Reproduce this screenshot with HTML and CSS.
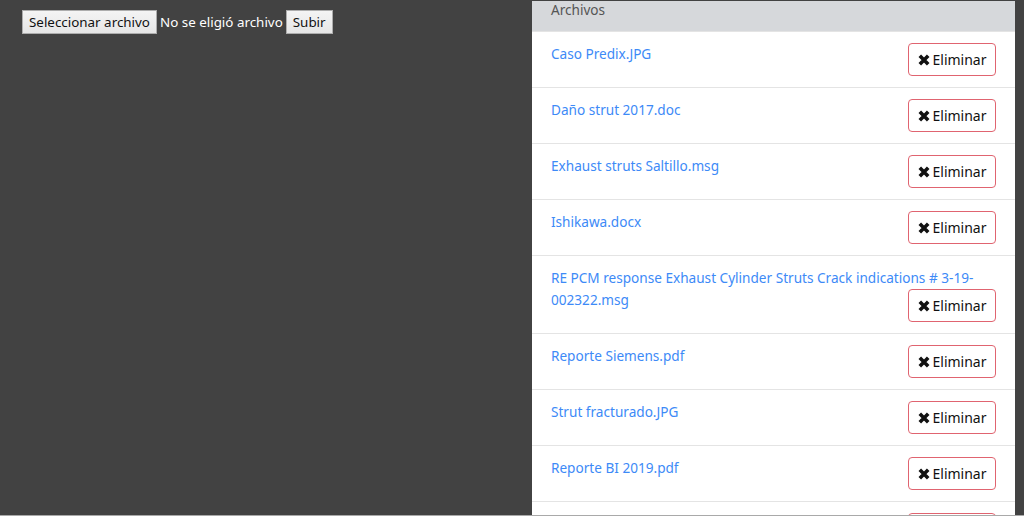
FILE: index.html
```html
<!DOCTYPE html>
<html lang="es">
<head>
  <meta charset="UTF-8">
  <title>Archivos</title>
  <link rel="stylesheet" href="styles.css">
</head>
<body>
  <div class="page">
    <div class="uploader">
      <form class="upload-form">
        <span class="file-btn">Seleccionar archivo</span>
        <span class="file-name">No se eligió archivo</span>
        <button type="submit" class="submit-btn">Subir</button>
      </form>
    </div>

    <div class="files">
      <div class="files-header">Archivos</div>
      <ul class="file-list">
        <li class="file-item">
          <a href="#">Caso Predix.JPG</a>
          <button class="btn-delete"><svg viewBox="0 0 12 12"><path d="M1.8 1.8L10.2 10.2M10.2 1.8L1.8 10.2"/></svg>Eliminar</button>
        </li>
        <li class="file-item">
          <a href="#">Daño strut 2017.doc</a>
          <button class="btn-delete"><svg viewBox="0 0 12 12"><path d="M1.8 1.8L10.2 10.2M10.2 1.8L1.8 10.2"/></svg>Eliminar</button>
        </li>
        <li class="file-item">
          <a href="#">Exhaust struts Saltillo.msg</a>
          <button class="btn-delete"><svg viewBox="0 0 12 12"><path d="M1.8 1.8L10.2 10.2M10.2 1.8L1.8 10.2"/></svg>Eliminar</button>
        </li>
        <li class="file-item">
          <a href="#">Ishikawa.docx</a>
          <button class="btn-delete"><svg viewBox="0 0 12 12"><path d="M1.8 1.8L10.2 10.2M10.2 1.8L1.8 10.2"/></svg>Eliminar</button>
        </li>
        <li class="file-item">
          <a href="#">RE PCM response Exhaust Cylinder Struts Crack indications # 3-19-002322.msg</a>
          <button class="btn-delete"><svg viewBox="0 0 12 12"><path d="M1.8 1.8L10.2 10.2M10.2 1.8L1.8 10.2"/></svg>Eliminar</button>
        </li>
        <li class="file-item">
          <a href="#">Reporte Siemens.pdf</a>
          <button class="btn-delete"><svg viewBox="0 0 12 12"><path d="M1.8 1.8L10.2 10.2M10.2 1.8L1.8 10.2"/></svg>Eliminar</button>
        </li>
        <li class="file-item">
          <a href="#">Strut fracturado.JPG</a>
          <button class="btn-delete"><svg viewBox="0 0 12 12"><path d="M1.8 1.8L10.2 10.2M10.2 1.8L1.8 10.2"/></svg>Eliminar</button>
        </li>
        <li class="file-item">
          <a href="#">Reporte BI 2019.pdf</a>
          <button class="btn-delete"><svg viewBox="0 0 12 12"><path d="M1.8 1.8L10.2 10.2M10.2 1.8L1.8 10.2"/></svg>Eliminar</button>
        </li>
        <li class="file-item">
          <a href="#">Minuta 8D.xlsx</a>
          <button class="btn-delete"><svg viewBox="0 0 12 12"><path d="M1.8 1.8L10.2 10.2M10.2 1.8L1.8 10.2"/></svg>Eliminar</button>
        </li>
      </ul>
    </div>
  </div>
</body>
</html>
```

FILE: styles.css
```css
body {
  margin: 0;
  background: #fff;
  font-family: "Noto Sans", "Open Sans", sans-serif;
  font-size: 13.6px;
  line-height: 1.5;
}
.page {
  display: flex;
  height: 515px;
  background: #424242;
  border-bottom: 1px solid #a9a9a9;
  overflow: hidden;
  padding-right: 9px;
}
.uploader {
  width: 532px;
  padding: 10px 22px;
  box-sizing: border-box;
}
.upload-form {
  display: flex;
  align-items: center;
  gap: 3px;
  font-size: 13.4px;
}
.file-btn,
.submit-btn {
  font: inherit;
  line-height: 22px;
  padding: 0 6px;
  color: #111;
  background: linear-gradient(#f4f4f4, #e6e6e6);
  border: 1px solid #adadad;
}
.file-name {
  color: #fff;
}
.files {
  flex: 1;
  margin-top: 1px;
  background: #fff;
}
.files-header {
  height: 30px;
  line-height: 18px;
  padding: 0 19px;
  box-sizing: border-box;
  background: #d6d8db;
  color: #555;
}
.file-list {
  list-style: none;
  margin: 0;
  padding: 0;
}
.file-item {
  display: flow-root;
  padding: 11px 19px 11px;
  border-top: 1px solid #e4e4e4;
  min-height: 33px;
}
.file-item a {
  color: #3d8af7;
  text-decoration: none;
  line-height: 22px;
}
.btn-delete {
  float: right;
  height: 33px;
  width: 88px;
  padding: 0;
  font: inherit;
  font-size: 14px;
  color: #111;
  background: #fff;
  border: 1px solid #e06470;
  border-radius: 4px;
}
.btn-delete svg {
  width: 12px;
  height: 12px;
  margin-right: 3px;
  vertical-align: -1px;
  stroke: #111;
  stroke-width: 3.6;
  fill: none;
}
```
